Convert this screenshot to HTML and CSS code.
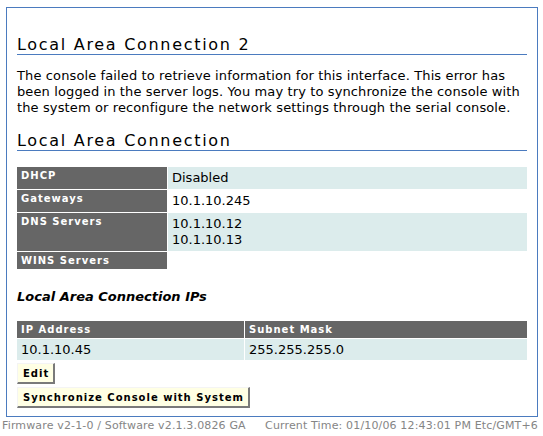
FILE: index.html
```html
<!DOCTYPE html>
<html>
<head>
<meta charset="utf-8">
<title>Network Interfaces</title>
<link rel="stylesheet" href="styles.css">
</head>
<body>
<div class="box">
  <h2 class="section-title first">Local Area Connection 2</h2>
  <p class="message">The console failed to retrieve information for this interface. This error has been logged in the server logs. You may try to synchronize the console with the system or reconfigure the network settings through the serial console.</p>

  <h2 class="section-title">Local Area Connection</h2>
  <table class="info">
    <tr class="alt"><th>DHCP</th><td>Disabled</td></tr>
    <tr><th>Gateways</th><td>10.1.10.245</td></tr>
    <tr class="alt"><th>DNS Servers</th><td>10.1.10.12<br>10.1.10.13</td></tr>
    <tr><th>WINS Servers</th><td></td></tr>
  </table>

  <h3 class="sub-title">Local Area Connection IPs</h3>
  <table class="ips">
    <tr><th class="col-ip">IP Address</th><th>Subnet Mask</th></tr>
    <tr class="alt"><td>10.1.10.45</td><td>255.255.255.0</td></tr>
  </table>
  <div class="actions">
    <button class="btn">Edit</button>
    <button class="btn">Synchronize Console with System</button>
  </div>
</div>
<div class="footer">
  <span>Firmware v2-1-0 / Software v2.1.3.0826 GA</span>
  <span>Current Time: 01/10/06 12:43:01 PM Etc/GMT+6</span>
</div>
</body>
</html>
```
FILE: styles.css
```css
html, body {
  margin: 0;
  padding: 0;
  background: #ffffff;
}
body {
  font-family: "DejaVu Sans", Verdana, sans-serif;
  color: #000;
}
.box {
  margin: 7px 5px 0 6px;
  border: 1px solid #4b7bbf;
  padding: 0 10px 8px 10px;
}
.section-title {
  font-size: 16px;
  font-weight: normal;
  letter-spacing: 1.7px;
  line-height: 18px;
  margin: 16px 0 0 0;
  padding: 0;
  border-bottom: 1px solid #4b7bbf;
}
.section-title.first {
  margin-top: 28px;
}
.message {
  font-size: 13px;
  letter-spacing: 0.12px;
  line-height: 16px;
  margin: 13px 0 0 0;
}
.info {
  margin-top: 16px;
  width: 100%;
  border-collapse: collapse;
}
.info th, .ips th {
  background: #666666;
  color: #ffffff;
  font-size: 10px;
  font-weight: bold;
  letter-spacing: 1px;
  text-align: left;
  vertical-align: top;
  padding: 3px 4px 2px 4px;
  line-height: 12px;
  border: 1px solid #ffffff;
}
.info th {
  width: 142px;
}
.info td, .ips td {
  font-size: 13px;
  line-height: 16px;
  padding: 3px 4px;
  vertical-align: top;
  border: 1px solid #ffffff;
}
.ips td {
  line-height: 15px;
}
.info tr:first-child th, .info tr:first-child td,
.ips tr:first-child th { border-top: 0; }
.info th, .ips tr th:first-child, .ips tr td:first-child { border-left: 0; }
.info td, .ips tr th:last-child, .ips tr td:last-child { border-right: 0; }
.alt td {
  background: #dcecec;
}
.sub-title {
  font-size: 13px;
  font-weight: bold;
  font-style: italic;
  line-height: 16px;
  margin: 19px 0 0 0;
}
.ips {
  margin-top: 16px;
  width: 100%;
  border-collapse: collapse;
}
.ips .col-ip {
  width: 219px;
}
.actions {
  display: flex;
  flex-direction: column;
  align-items: flex-start;
  gap: 3px;
  margin-top: 2px;
}
.btn {
  font-family: "DejaVu Sans", Verdana, sans-serif;
  font-size: 10px;
  font-weight: bold;
  letter-spacing: 1px;
  background: #ffffe4;
  color: #000;
  border-top: 1px solid #f4f4f4;
  border-left: 1px solid #f4f4f4;
  border-right: 2px solid #7a7a7a;
  border-bottom: 2px solid #7a7a7a;
  padding: 3px 4px 2px 5px;
  line-height: 13px;
  margin: 0;
}
.footer {
  display: flex;
  justify-content: space-between;
  white-space: nowrap;
  font-size: 11px;
  letter-spacing: 0.15px;
  line-height: 13px;
  color: #858585;
  margin: 2px 5px 0 2px;
}
```
